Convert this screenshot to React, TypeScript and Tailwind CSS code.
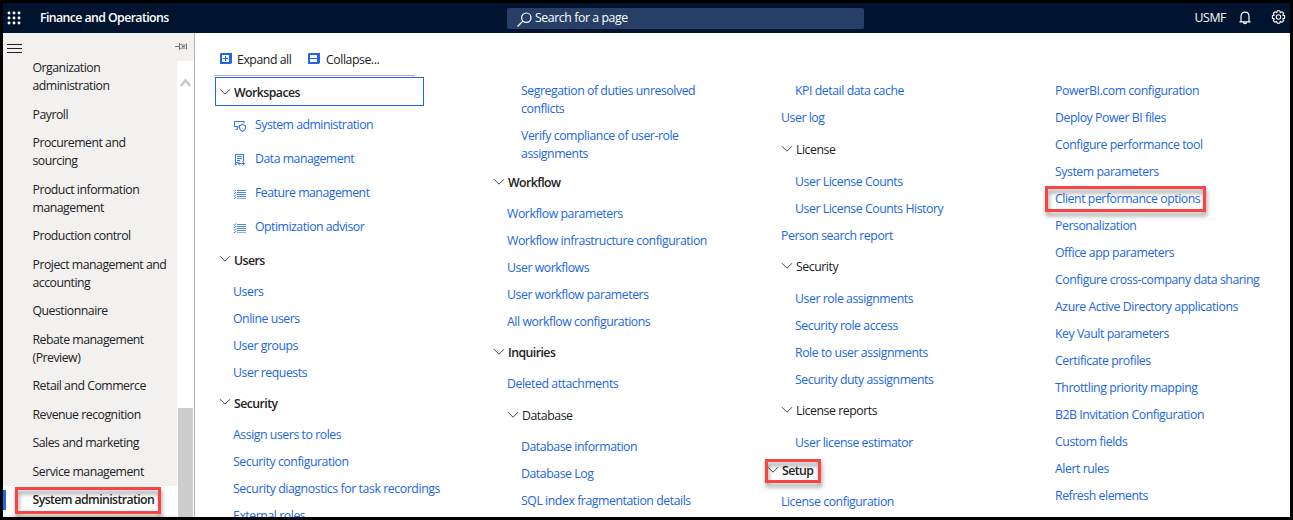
import React from "react";

type Row = {
  t: string[];
  k: "link" | "link2" | "head" | "sub";
  m?: string;
  mark?: string;
};

const sidebar: string[][] = [
  ["Organization", "administration"],
  ["Payroll"],
  ["Procurement and", "sourcing"],
  ["Product information", "management"],
  ["Production control"],
  ["Project management and", "accounting"],
  ["Questionnaire"],
  ["Rebate management", "(Preview)"],
  ["Retail and Commerce"],
  ["Revenue recognition"],
  ["Sales and marketing"],
  ["Service management"],
  ["System administration"],
];

const l = (...t: string[]): Row => ({ t, k: "link" });
const l2 = (...t: string[]): Row => ({ t, k: "link2" });
const head = (t: string, m = "", mark?: string): Row => ({ t: [t], k: "head", m, mark });
const sub = (t: string, m = ""): Row => ({ t: [t], k: "sub", m });

const col1: Row[] = [
  head("Users"),
  l("Users"),
  l("Online users"),
  l("User groups"),
  l("User requests"),
  head("Security"),
  l("Assign users to roles"),
  l("Security configuration"),
  { t: ["Security diagnostics for task recordings"], k: "link", m: "tracking-[-0.420px]" },
  l("External roles"),
];

const col2: Row[] = [
  l2("Segregation of duties unresolved", "conflicts"),
  l2("Verify compliance of user-role", "assignments"),
  head("Workflow", "-mt-[2px]"),
  l("Workflow parameters"),
  l("Workflow infrastructure configuration"),
  l("User workflows"),
  l("User workflow parameters"),
  l("All workflow configurations"),
  head("Inquiries"),
  l("Deleted attachments"),
  sub("Database", "mt-px"),
  l2("Database information"),
  l2("Database Log"),
  l2("SQL index fragmentation details"),
];

const col3: Row[] = [
  l2("KPI detail data cache"),
  l("User log"),
  sub("License", "my-px"),
  l2("User License Counts"),
  l2("User License Counts History"),
  l("Person search report"),
  sub("Security", "mb-px"),
  l2("User role assignments"),
  l2("Security role access"),
  l2("Role to user assignments"),
  l2("Security duty assignments"),
  sub("License reports", "mb-px"),
  l2("User license estimator"),
  head("Setup", "-mt-[3px]", "left-[2px] top-[5px] w-[56px] h-[24px]"),
  l("License configuration"),
];

const col4: Row[] = [
  l("PowerBI.com configuration"),
  l("Deploy Power BI files"),
  l("Configure performance tool"),
  l("System parameters"),
  { t: ["Client performance options"], k: "link", mark: "left-[8px] top-0 w-[161px] h-[26px]" },
  l("Personalization"),
  l("Office app parameters"),
  l("Configure cross-company data sharing"),
  l("Azure Active Directory applications"),
  l("Key Vault parameters"),
  l("Certificate profiles"),
  l("Throttling priority mapping"),
  l("B2B Invitation Configuration"),
  l("Custom fields"),
  l("Alert rules"),
  l("Refresh elements"),
];

function Callout({ pos }: { pos: string }) {
  return (
    <span
      className={`pointer-events-none absolute z-10 border-[3px] border-[#fa4343] drop-shadow-[1px_4px_2px_rgba(0,0,0,0.4)] ${pos}`}
    />
  );
}

function Chevron() {
  return (
    <svg width="12" height="8" viewBox="0 0 12 8" fill="none" stroke="#444" className="mr-[3px] -mt-[3px] shrink-0">
      <path d="M1 1.2 6 6.2 11 1.2" />
    </svg>
  );
}

const rowStyle = {
  link: "pl-[18px] py-[4.5px] text-[#2266e3]",
  link2: "pl-[32px] py-[4.5px] text-[#2266e3]",
  head: "pl-[4px] h-[35px] flex items-center font-semibold text-[#222] tracking-[-0.55px]",
  sub: "pl-[18px] h-[35px] flex items-center text-[#222]",
};

function Rows({ rows }: { rows: Row[] }) {
  return (
    <>
      {rows.map((r, i) => (
        <div key={i} className={`relative shrink-0 ${rowStyle[r.k]} ${r.m ?? ""}`}>
          {(r.k === "head" || r.k === "sub") && <Chevron />}
          {r.t.map((s) => (
            <div key={s}>{s}</div>
          ))}
          {r.mark && <Callout pos={r.mark} />}
        </div>
      ))}
    </>
  );
}

function SystemIcon() {
  return (
    <svg width="14" height="14" viewBox="0 0 14 14" fill="none" stroke="#3d78e5" strokeWidth="1.100">
      <path d="M5.500 7.500H1.500V2.500h9.500v2M2.500 10.500h1.500l1-3" />
      <path d="M6.500 6.500c1.200 0 2-.3 3-1.200 1 .9 1.800 1.200 3 1.200v2.500c0 1.600-1.500 2.700-3 3.500-1.500-.8-3-1.900-3-3.500z" />
    </svg>
  );
}

function DataIcon() {
  return (
    <svg width="14" height="14" viewBox="0 0 14 14" fill="none" stroke="#3d78e5">
      <path d="M4 11.500H2.500V1.500h8v7M4 3.500h5M4 5.500h5M4 7.500h3M2.500 9.500h3" strokeWidth="1.150" />
      <path d="M5 10.500h7M7 8.500l-2 2 2 2M9.500 8.500l2 2-2 2" />
    </svg>
  );
}

function ListIcon() {
  return (
    <svg width="14" height="14" viewBox="0 0 14 14" fill="none" stroke="#3d78e5">
      <path d="M4 3.500h9M4 5.500h9M4 7.500h9M4 9.500h9" opacity=".9" />
      <path d="M4 11.500h9" opacity=".6" />
      <path d="M.8 3.500l.8.800 1.500-1.800M.8 6l.8.800 1.500-1.800M.8 8.500l.8.800 1.500-1.800M.8 11l.8.800 1.500-1.800" />
    </svg>
  );
}

function ToggleIcon({ plus }: { plus?: boolean }) {
  return (
    <svg width="12" height="11" viewBox="0 0 12 11" className="-mt-[3px]">
      <path d="M1 0H12V10L10.500 11H0V1z" fill="#2266e3" />
      <path d="M2 2h7v7H2z" fill="#fff" />
      <path d={plus ? "M3 5h5v1H3zM5 3h1v5H5z" : "M2 5h7v1H2z"} fill="#2266e3" />
    </svg>
  );
}

const workspaces = [
  { t: "System administration", icon: <SystemIcon /> },
  { t: "Data management", icon: <DataIcon /> },
  { t: "Feature management", icon: <ListIcon /> },
  { t: "Optimization advisor", icon: <ListIcon /> },
];

function TopBar() {
  return (
    <header className="flex h-[30px] shrink-0 items-center bg-[#00142f] text-white">
      <svg width="14" height="14" viewBox="0 0 14 14" fill="#fff" className="ml-[4px] shrink-0">
        {[2, 7, 12].map((y) => [2, 7, 12].map((x) => <circle key={`${x}-${y}`} cx={x} cy={y} r="1.450" />))}
      </svg>
      <div className="ml-[19px] w-[467px] -mt-[1px] font-semibold tracking-[-0.58px]">Finance and Operations</div>
      <div className="flex h-[21px] w-[357px] items-center rounded-[2px] bg-[#273f66]">
        <svg width="15" height="15" viewBox="0 0 15 15" fill="none" stroke="#fff" strokeWidth="1.200" className="ml-[10px] mt-[3px]">
          <circle cx="9.300" cy="5.700" r="4.700" />
          <path d="M6 9 .5 14.500" />
        </svg>
        <span className="ml-[3px] tracking-[-0.42px]">Search for a page</span>
      </div>
      <div className="ml-auto flex items-center">
        <span className="tracking-[-0.400px]">USMF</span>
        <svg width="12" height="14" viewBox="0 0 12 14" fill="none" stroke="#fff" strokeWidth="1.200" className="ml-[13px]">
          <path d="M2 10.500V5.500C2 2.800 3.500 1.200 6 1.200S10 2.800 10 5.500v5M.5 10.800h11M4.500 11c0 2.300 3 2.300 3 0" />
        </svg>
        <svg width="15" height="15" viewBox="0 0 15 15" fill="none" stroke="#fff" strokeWidth="1.100" strokeLinejoin="round" className="-mt-px ml-[20px] mr-[4px]">
          <path d="M6.200.8h2.600l.4 1.900 1.700-1 1.800 1.800-1 1.700 1.900.4v2.800l-1.900.4 1 1.700-1.800 1.800-1.700-1-.4 1.900H6.200l-.4-1.900-1.700 1-1.800-1.800 1-1.700L1.400 8.400V5.600l1.900-.4-1-1.700 1.800-1.800 1.700 1z" />
          <circle cx="7.500" cy="7" r="2.200" />
        </svg>
      </div>
    </header>
  );
}

function Sidebar() {
  return (
    <nav className="flex w-[192px] shrink-0 flex-col border-r border-[#b5b3b1] bg-[#f2f1f0] tracking-[-0.5px] text-[#222]">
      <div className="flex h-[28px] shrink-0 justify-between">
        <svg width="15" height="11" viewBox="0 0 15 11" stroke="#222" className="ml-[4px] mt-[10px]">
          <path d="M0 1.500h15M0 5.500h15M0 9.500h15" />
        </svg>
        <svg width="13" height="9" viewBox="0 0 13 9" fill="none" stroke="#777" className="mr-[6px] mt-[9px]">
          <path d="M0 4.500h4M4.500 1v7M5 2.500l2 .5h3.500M5 6.500l2-.5h3.500M11.500 1.500v6M7 4.500h3" />
        </svg>
      </div>
      <div className="flex min-h-0 flex-1">
        <div className="-mt-[7px] w-[174px]">
          {sidebar.map((lines, i) => {
            const active = i === sidebar.length - 1;
            return (
              <div
                key={lines[0]}
                className={`relative py-[5.250px] pl-[29.500px] whitespace-nowrap ${active ? "bg-white font-semibold tracking-[-0.6px]" : ""}`}
              >
                {active && <span className="absolute left-0 top-[4px] h-[20px] w-[3px] bg-[#2266e3]" />}
                {lines.map((s) => (
                  <div key={s}>{s}</div>
                ))}
                {active && <Callout pos="left-[12px] top-px w-[146px] h-[27px]" />}
              </div>
            );
          })}
        </div>
        <div className="flex w-[17px] flex-col items-center bg-white">
          <svg width="11" height="9" viewBox="0 0 11 9" fill="none" stroke="#c8c8c8" strokeWidth="2.600" className="mt-[17px]">
            <path d="M.8 8 5.500 2.500 10.200 8" />
          </svg>
          <div className="mt-auto h-[109px] w-[15px] bg-[#cdcdcd]" />
        </div>
      </div>
    </nav>
  );
}

export default function App() {
  return (
    <div className="flex h-[520px] w-[1293px] flex-col overflow-hidden border-[3px] border-black bg-white font-['Open_Sans','Noto_Sans',sans-serif] text-[12.300px] leading-[18px] tracking-[-0.450px]">
      <TopBar />
      <div className="flex min-h-0 flex-1">
        <Sidebar />
        <main className="flex min-w-0 flex-1 overflow-hidden pl-[20px] whitespace-nowrap">
          <div className="flex w-[274px] shrink-0 flex-col">
            <div className="flex h-[43px] w-[200px] shrink-0 items-center border-b border-[#b0aeac] pt-[11px] pl-[5px] text-[#222]">
              <ToggleIcon plus />
              <span className="ml-[5px] w-[71px]">Expand all</span>
              <ToggleIcon />
              <span className="ml-[6px]">Collapse...</span>
            </div>
            <div className="mt-px mb-[2px] flex h-[29px] w-[209px] shrink-0 items-center border border-[#2266e3] pl-[3px] pt-[3px] font-semibold tracking-[-0.55px] text-[#222]">
              <Chevron />
              Workspaces
            </div>
            {workspaces.map((w) => (
              <div key={w.t} className="flex h-[34px] shrink-0 items-center pl-[18px] text-[#2266e3]">
                <span className="mt-[2px]">{w.icon}</span>
                <span className="ml-[8px] tracking-[-0.5px]">{w.t}</span>
              </div>
            ))}
            <div className="-mt-px flex flex-col">
              <Rows rows={col1} />
            </div>
          </div>
          {[col2, col3, col4].map((c, i) => (
            <div key={i} className="flex w-[274px] shrink-0 flex-col pt-[44.500px]">
              <Rows rows={c} />
            </div>
          ))}
        </main>
      </div>
    </div>
  );
}
